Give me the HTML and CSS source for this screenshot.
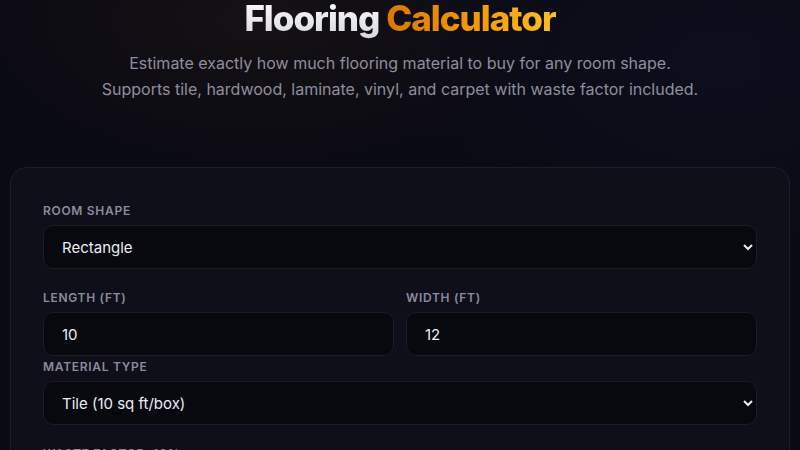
FILE: index.html
```html
<!DOCTYPE html>
<html lang="en">
<head>
<meta charset="utf-8">
<title>Flooring Calculator</title>
<link rel="stylesheet" href="styles.css">
</head>
<body>
<div class="page">
  <header class="hero">
    <h1 class="title"><span class="t-white">Flooring</span> <span class="t-amber">Calculator</span></h1>
    <p class="subtitle">Estimate exactly how much flooring material to buy for any room shape.<br>Supports tile, hardwood, laminate, vinyl, and carpet with waste factor included.</p>
  </header>

  <section class="card">
    <div class="group">
      <label class="label" for="shape">Room Shape</label>
      <select id="shape" class="field">
        <option>Rectangle</option>
        <option>L-Shape</option>
        <option>Circle</option>
      </select>
    </div>

    <div class="row">
      <div class="col">
        <label class="label" for="len">Length (ft)</label>
        <input id="len" class="field" type="text" value="10">
      </div>
      <div class="col">
        <label class="label" for="wid">Width (ft)</label>
        <input id="wid" class="field" type="text" value="12">
      </div>
    </div>

    <div class="group">
      <label class="label" for="mat">Material Type</label>
      <select id="mat" class="field">
        <option>Tile (10 sq ft/box)</option>
        <option>Hardwood</option>
        <option>Laminate</option>
      </select>
    </div>

    <div class="group">
      <label class="label" for="waste">Waste Factor: 10%</label>
      <input id="waste" class="range" type="range" min="0" max="25" value="10">
    </div>
  </section>
</div>
</body>
</html>
```

FILE: styles.css
```css
* { box-sizing: border-box; }

html, body {
  margin: 0;
  padding: 0;
}

body {
  background-color: #0a0a13;
  background-image:
    radial-gradient(ellipse 420px 220px at 260px 20px, rgba(120, 80, 30, 0.10), transparent 70%),
    radial-gradient(ellipse 500px 300px at 720px 60px, rgba(40, 50, 110, 0.10), transparent 70%);
  color: #e6e6ee;
  font-family: Inter, "Noto Sans", "Liberation Sans", sans-serif;
  min-height: 100vh;
}

.page {
  padding: 0 10px;
}

.hero {
  text-align: center;
  padding-bottom: 65px;
}

.title {
  margin: 0;
  font-size: 35px;
  line-height: 1;
  font-weight: 800;
  letter-spacing: -1px;
  padding-top: 1px;
}

.t-white {
  background: linear-gradient(180deg, #ffffff 0%, #d6d6e0 100%);
  -webkit-background-clip: text;
  background-clip: text;
  color: transparent;
}

.t-amber {
  background: linear-gradient(90deg, #d97706 0%, #f59e0b 60%, #fbbf24 100%);
  -webkit-background-clip: text;
  background-clip: text;
  color: transparent;
}

.subtitle {
  margin: 15px 0 0;
  font-size: 16px;
  line-height: 25.6px;
  color: #8e8e9e;
}

.card {
  background: #0f0f1a;
  border: 1px solid #1d1d2b;
  border-radius: 16px;
  padding: 34px 32px 32px;
}

.group {
  margin-bottom: 20px;
}

.label {
  display: block;
  font-size: 12px;
  line-height: 18px;
  font-weight: 600;
  letter-spacing: 0.7px;
  text-transform: uppercase;
  color: #8b8b9c;
  margin-bottom: 5px;
}

.field {
  display: block;
  width: 100%;
  height: 44px;
  background: #08080f;
  border: 1px solid #1c1c29;
  border-radius: 10px;
  color: #ececf2;
  font-family: Inter, "Noto Sans", "Liberation Sans", sans-serif;
  font-size: 15px;
  padding: 0 14px 0 18px;
  outline: none;
  color-scheme: dark;
}

select.field {
  padding-left: 14px;
}

.row {
  display: grid;
  grid-template-columns: 1fr 1fr;
  gap: 12px;
  margin-bottom: 2px;
}

.range {
  width: 100%;
  accent-color: #f59e0b;
}
```
